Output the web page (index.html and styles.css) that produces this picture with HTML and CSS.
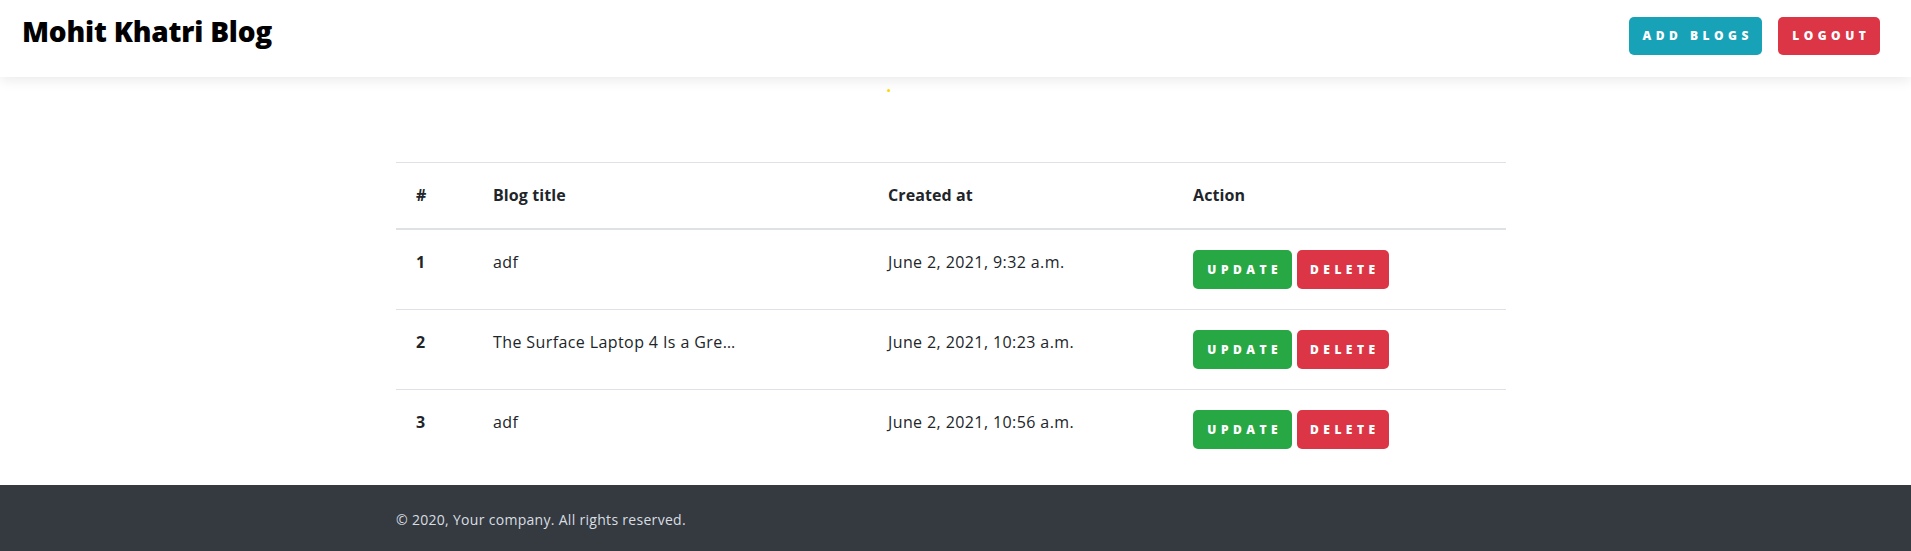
FILE: index.html
```html
<!DOCTYPE html>
<html lang="en">
<head>
<meta charset="utf-8">
<title>Mohit Khatri Blog</title>
<link rel="stylesheet" href="styles.css">
</head>
<body>
<nav class="navbar">
  <a class="brand" href="#">Mohit Khatri Blog</a>
  <div class="nav-actions">
    <a class="btn btn-info btn-add" href="#">Add Blogs</a>
    <a class="btn btn-danger btn-logout" href="#">Logout</a>
  </div>
</nav>
<main class="page">
  <div class="container loader-row"><span class="loader-dot"></span></div>
  <div class="container">
    <table class="table">
      <thead>
        <tr>
          <th class="col-num">#</th>
          <th class="col-title">Blog title</th>
          <th class="col-date">Created at</th>
          <th class="col-action">Action</th>
        </tr>
      </thead>
      <tbody>
        <tr>
          <td class="num">1</td>
          <td>adf</td>
          <td>June 2, 2021, 9:32 a.m.</td>
          <td><a class="btn btn-success btn-update" href="#">Update</a> <a class="btn btn-danger btn-delete" href="#">Delete</a></td>
        </tr>
        <tr>
          <td class="num">2</td>
          <td>The Surface Laptop 4 Is a Gre…</td>
          <td>June 2, 2021, 10:23 a.m.</td>
          <td><a class="btn btn-success btn-update" href="#">Update</a> <a class="btn btn-danger btn-delete" href="#">Delete</a></td>
        </tr>
        <tr>
          <td class="num">3</td>
          <td>adf</td>
          <td>June 2, 2021, 10:56 a.m.</td>
          <td><a class="btn btn-success btn-update" href="#">Update</a> <a class="btn btn-danger btn-delete" href="#">Delete</a></td>
        </tr>
      </tbody>
    </table>
  </div>
</main>
<footer class="footer">
  <div class="container">
    <p class="copyright">© 2020, Your company. All rights reserved.</p>
  </div>
</footer>
</body>
</html>
```
FILE: styles.css
```css
* { box-sizing: border-box; }

html, body {
  margin: 0;
  padding: 0;
  background: #fff;
}

body {
  font-family: "Open Sans", "Liberation Sans", sans-serif;
  font-size: 16px;
  line-height: 24px;
  color: #212529;
}

a { text-decoration: none; }

.navbar {
  height: 77px;
  display: flex;
  justify-content: space-between;
  align-items: flex-start;
  padding: 0 31px 0 22px;
  background: #fff;
  box-shadow: 0 4px 12px rgba(0, 0, 0, 0.08);
  position: relative;
  z-index: 1;
}

.brand {
  margin-top: 13px;
  font-size: 28px;
  line-height: 36px;
  font-weight: 800;
  color: #000;
  letter-spacing: -0.2px;
}

.nav-actions {
  margin-top: 17px;
  display: flex;
  gap: 16px;
}

.btn {
  display: inline-block;
  color: #fff;
  font-weight: 800;
  font-size: 12px;
  text-transform: uppercase;
  letter-spacing: 4.5px;
  text-align: center;
  border-radius: 5px;
  padding-left: 4.5px;
  vertical-align: top;
}

.btn-info { background: #17a2b8; }
.btn-danger { background: #dc3545; }
.btn-success { background: #28a745; }

.btn-add { width: 133px; height: 38px; line-height: 38px; }
.btn-logout { width: 102px; height: 38px; line-height: 38px; }
.btn-update { width: 99px; height: 39px; line-height: 39px; }
.btn-delete { width: 92px; height: 39px; line-height: 39px; }

.container {
  width: 1110px;
  padding-right: 9px;
  box-sizing: content-box;
  margin: 0 auto;
}

.loader-row {
  height: 73px;
  padding-top: 12px;
}

.loader-dot {
  display: block;
  width: 3px;
  height: 3px;
  margin-left: 491px;
  border-radius: 50%;
  background: #ffd700;
}

.table {
  width: 1110px;
  border-collapse: collapse;
  table-layout: fixed;
  margin-bottom: 16px;
  letter-spacing: 0.4px;
}

.col-num { width: 77px; }
.col-title { width: 395px; }
.col-date { width: 305px; }
.col-action { width: 333px; }

.table th,
.table td {
  padding: 20px;
  text-align: left;
  vertical-align: top;
  white-space: nowrap;
}

.table th {
  font-weight: 700;
  border-top: 1px solid #dee2e6;
  border-bottom: 2px solid #dee2e6;
  height: 66px;
  line-height: 25px;
  letter-spacing: 0.1px;
}

.table tbody tr + tr td {
  border-top: 1px solid #dee2e6;
}

.table td.num { font-weight: 700; }

.table .btn { letter-spacing: 4.5px; }

.footer {
  background: #343a40;
  padding: 24px 0 26px;
}

.copyright {
  margin: 0;
  font-size: 14px;
  line-height: 21px;
  letter-spacing: 0.3px;
  color: #d9dde2;
}
```
